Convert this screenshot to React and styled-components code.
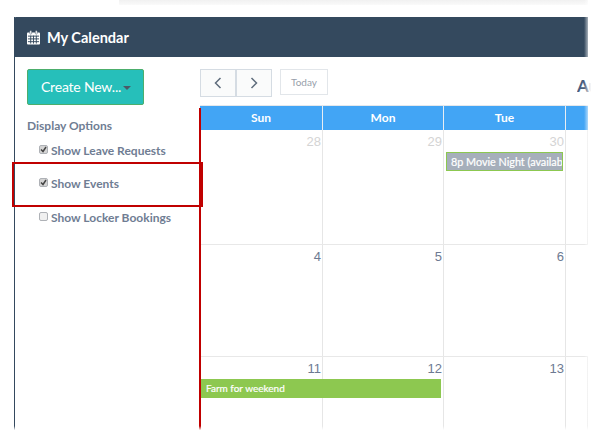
import React from "react";
import styled, { createGlobalStyle } from "styled-components";

const Global = createGlobalStyle`
  html, body { margin: 0; padding: 0; background: #fff; }
  body { width: 594px; height: 432px; overflow: hidden; font-family: Lato, "Open Sans", sans-serif; }
  * { box-sizing: border-box; }
`;

const Page = styled.div`
  position: relative;
  width: 594px;
  height: 432px;
  overflow: hidden;
  background: #fff;
`;

const TopStrip = styled.div`
  height: 5px;
  margin: 0 6px 12px 119px;
  background: linear-gradient(180deg, #f1f1f1, #fafafa);
`;

const Panel = styled.div`
  margin-left: 14px;
  width: 574px;
  height: 420px;
  border-left: 1px solid #34495e;
  display: flex;
  flex-direction: column;
`;

const PanelHeader = styled.div`
  height: 40px;
  margin-left: -1px;
  background: #34495e;
  border-radius: 2px 0 0 0;
  display: flex;
  align-items: center;
  gap: 7px;
  padding-left: 13px;
  color: #fff;
  font-size: 14.5px;
  font-weight: 700;
`;

const PanelBody = styled.div`
  flex: 1;
  display: flex;
  min-height: 0;
`;

const Sidebar = styled.div`
  width: 185px;
  flex: none;
  padding: 12px 0 0 12px;
`;

const CreateButton = styled.div`
  width: 117px;
  height: 36px;
  padding: 0 0 2px 13px;
  background: #26bfba;
  border: 1px solid #4cae6c;
  border-radius: 2px;
  color: #fff;
  font-size: 14px;
  letter-spacing: -0.2px;
  display: flex;
  align-items: center;
  gap: 2px;
`;

const Caret = styled.span`
  width: 0;
  height: 0;
  margin-top: 4px;
  border-left: 4px solid transparent;
  border-right: 4px solid transparent;
  border-top: 4px solid #4a5a68;
`;

const OptionsTitle = styled.div`
  margin-top: 13px;
  color: #6f7d93;
  font-size: 12px;
  font-weight: 700;
  line-height: 16px;
`;

const OptionList = styled.div`
  display: flex;
  flex-direction: column;
  gap: 17.5px;
  margin-top: 8px;
  padding-left: 12px;
`;

const Option = styled.div`
  display: flex;
  align-items: center;
  gap: 3px;
  height: 16px;
  color: #6f7d93;
  font-size: 12px;
  font-weight: 700;
`;

const Box = styled.span`
  width: 9px;
  height: 9px;
  margin-top: -2px;
  border: 1px solid #aeb1b6;
  border-radius: 2px;
  background: ${p => (p.$checked ? "#d4d4d4" : "#f0f0f0")};
  display: flex;
  align-items: center;
  justify-content: center;
`;

const Main = styled.div`
  flex: 1;
  min-width: 0;
  display: flex;
  flex-direction: column;
  padding-top: 12px;
`;

const Toolbar = styled.div`
  height: 36px;
  display: flex;
  align-items: flex-start;
`;

const NavButton = styled.div`
  width: 36px;
  height: 28px;
  margin-right: ${p => (p.$last ? "8px" : "0")};
  border: 1px solid #d5dce3;
  background: #fafbfb;
  display: flex;
  align-items: center;
  justify-content: center;
  color: #5e6c7c;
`;

const TodayButton = styled.div`
  width: 48px;
  height: 26px;
  padding-bottom: 1px;
  border: 1px solid #e2e6ea;
  background: #fff;
  color: #97a0aa;
  font-size: 10px;
  display: flex;
  align-items: center;
  justify-content: center;
`;

const MonthTitle = styled.div`
  margin-left: auto;
  margin-right: -4px;
  width: 15px;
  overflow: hidden;
  white-space: nowrap;
  color: #4a5e80;
  font-size: 17px;
  font-weight: 700;
  line-height: 33px;
`;

const Columns = `123px 121px 122px 22px`;

const DayHeader = styled.div`
  display: grid;
  grid-template-columns: ${Columns};
  border-top: 1px solid #e4e8ec;
  height: 25px;
  background: #42a5f5;
`;

const DayName = styled.div`
  padding-bottom: 2px;
  border-right: 1px solid #e8eef3;
  color: #fff;
  font-size: 12px;
  font-weight: 700;
  display: flex;
  align-items: center;
  justify-content: center;
  &:last-child { border-right: 0; }
`;

const Week = styled.div`
  position: relative;
  flex: none;
  height: ${p => p.$height}px;
  display: grid;
  grid-template-columns: ${Columns};
  border-bottom: 1px solid #e8e8e8;
`;

const Day = styled.div`
  border-right: 1px solid #e6e6e6;
  padding: 4px 1px 0 0;
  text-align: right;
  font-family: "Liberation Sans", Arial, sans-serif;
  font-size: 13px;
  line-height: 16px;
  color: ${p => (p.$muted ? "#d4d4d4" : "#6d7a92")};
  &:last-child { border-right: 0; }
`;

const MovieEvent = styled.div`
  position: absolute;
  left: 246px;
  top: 22px;
  width: 117px;
  height: 19px;
  padding-left: 4px;
  overflow: hidden;
  white-space: nowrap;
  background: #a6afbb;
  border: 1px solid #8cc850;
  color: #fff;
  font-size: 10.8px;
  font-weight: 400;
  line-height: 17px;
  -webkit-text-stroke: 0.2px #fff;
`;

const FarmEvent = styled.div`
  position: absolute;
  left: 1px;
  top: 22px;
  width: 240px;
  height: 19px;
  padding-left: 5px;
  background: #8dc850;
  color: #fff;
  font-size: 10px;
  font-weight: 400;
  line-height: 19px;
  -webkit-text-stroke: 0.2px #fff;
`;

const RedLine = styled.div`
  position: absolute;
  left: 199px;
  top: 108px;
  width: 2px;
  height: 322px;
  background: #c00000;
`;

const RedBox = styled.div`
  position: absolute;
  left: 12px;
  top: 162px;
  width: 191px;
  height: 45px;
  border: 2px solid #c00000;
`;

const RightFade = styled.div`
  position: absolute;
  right: 0;
  top: 0;
  width: 10px;
  height: 100%;
  background: linear-gradient(90deg, rgba(255,255,255,0), #fff 70%);
`;

const BottomFade = styled.div`
  position: absolute;
  left: 0;
  bottom: 0;
  width: 100%;
  height: 6px;
  background: linear-gradient(180deg, rgba(255,255,255,0), #fff 70%);
`;

const CalendarIcon = () => (
  <svg width="13" height="15" viewBox="0 0 14 15" fill="none">
    <rect x="0" y="2" width="14" height="13" rx="1" fill="#fff" />
    <rect x="3" y="0" width="2" height="4" rx="1" fill="#fff" stroke="#34495e" strokeWidth="0.5" />
    <rect x="9" y="0" width="2" height="4" rx="1" fill="#fff" stroke="#34495e" strokeWidth="0.5" />
    <g fill="#34495e">
      <rect x="1" y="5.5" width="12" height="1" />
      <rect x="1" y="8.5" width="12" height="1" />
      <rect x="1" y="11.5" width="12" height="1" />
      <rect x="3.5" y="5.5" width="1" height="8.5" />
      <rect x="6.5" y="5.5" width="1" height="8.5" />
      <rect x="9.5" y="5.5" width="1" height="8.5" />
    </g>
  </svg>
);

const Chevron = ({ dir }) => (
  <svg width="8" height="12" viewBox="0 0 8 12" fill="none" stroke="currentColor" strokeWidth="1.5">
    <path d={dir === "left" ? "M6.5 1 L1.5 6 L6.5 11" : "M1.5 1 L6.5 6 L1.5 11"} />
  </svg>
);

const Tick = () => (
  <svg width="7" height="7" viewBox="0 0 7 7" fill="none" stroke="#444" strokeWidth="1.5">
    <path d="M1 3.5 L3 5.5 L6 1" />
  </svg>
);

const options = [
  { label: "Show Leave Requests", checked: true },
  { label: "Show Events", checked: true },
  { label: "Show Locker Bookings", checked: false },
];

const weeks = [
  { height: 115, days: [["28", true], ["29", true], ["30", true], ["", true]], event: <MovieEvent>8p Movie Night (available)</MovieEvent> },
  { height: 112, days: [["4"], ["5"], ["6"], [""]] },
  { height: 80, days: [["11"], ["12"], ["13"], [""]], event: <FarmEvent>Farm for weekend</FarmEvent> },
];

export default function App() {
  return (
    <Page>
      <Global />
      <TopStrip />
      <Panel>
        <PanelHeader>
          <CalendarIcon />
          My Calendar
        </PanelHeader>
        <PanelBody>
          <Sidebar>
            <CreateButton>
              Create New...
              <Caret />
            </CreateButton>
            <OptionsTitle>Display Options</OptionsTitle>
            <OptionList>
              {options.map(o => (
                <Option key={o.label}>
                  <Box $checked={o.checked}>{o.checked && <Tick />}</Box>
                  {o.label}
                </Option>
              ))}
            </OptionList>
          </Sidebar>
          <Main>
            <Toolbar>
              <NavButton><Chevron dir="left" /></NavButton>
              <NavButton $last><Chevron dir="right" /></NavButton>
              <TodayButton>Today</TodayButton>
              <MonthTitle>August</MonthTitle>
            </Toolbar>
            <DayHeader>
              <DayName>Sun</DayName>
              <DayName>Mon</DayName>
              <DayName>Tue</DayName>
              <DayName />
            </DayHeader>
            {weeks.map((w, i) => (
              <Week key={i} $height={w.height}>
                {w.days.map(([n, muted], j) => (
                  <Day key={j} $muted={muted}>{n}</Day>
                ))}
                {w.event}
              </Week>
            ))}
          </Main>
        </PanelBody>
      </Panel>
      <RedLine />
      <RedBox />
      <RightFade />
      <BottomFade />
    </Page>
  );
}
